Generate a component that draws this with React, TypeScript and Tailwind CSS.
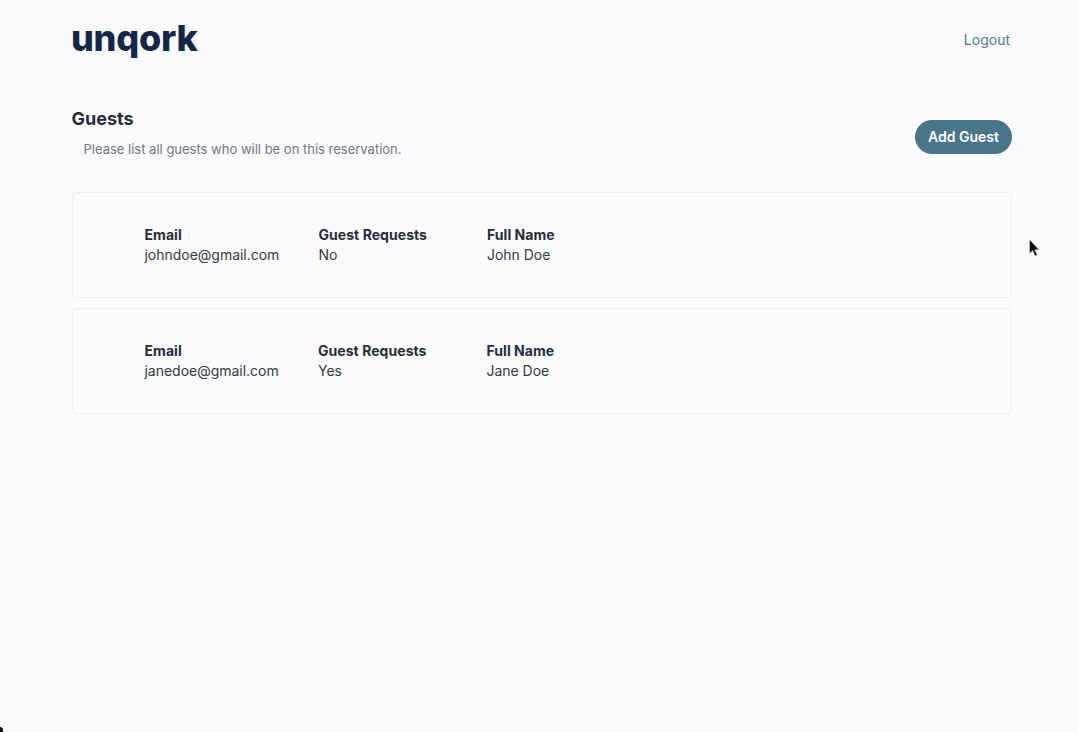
const font = { fontFamily: "Inter, 'Liberation Sans', sans-serif" };

function Field({ label, value, className }: { label: string; value: string; className: string }) {
  return (
    <div className={className}>
      <div className="text-[14px] leading-5 font-bold tracking-[0.05px] text-[#252d3a]">{label}</div>
      <div className="text-[14px] leading-5 tracking-[-0.02px] text-[#323a47]">{value}</div>
    </div>
  );
}

function GuestCard({ email, requests, name, second }: { email: string; requests: string; name: string; second?: boolean }) {
  return (
    <div className="h-[106px] rounded border border-[#eceef3] pt-[32px] pl-[71.5px] flex">
      <Field label="Email" value={email} className={second ? "w-[173.5px]" : "w-[174px]"} />
      <Field label="Guest Requests" value={requests} className="w-[168.5px]" />
      <Field label="Full Name" value={name} className="w-[120px]" />
    </div>
  );
}

export default function App() {
  return (
    <div style={font} className="relative h-[732px] overflow-hidden bg-[#fafafc] pl-[72px] pr-[66px]">
      <header className="flex h-[80px] items-start justify-between">
        <div className="mt-[15px] -ml-[1px] text-[36px] leading-[46px] font-extrabold tracking-[-0.25px] text-[#14274a]">unqork</div>
        <a className="mt-[30px] mr-[2px] text-[14px] leading-5 text-[#4f7a8e]">Logout</a>
      </header>
      <section className="mt-[27px] flex h-[85px] items-start justify-between">
        <div>
          <h1 className="-ml-[0.5px] text-[18px] leading-6 font-bold text-[#252d3a]">Guests</h1>
          <p className="mt-[8px] ml-[11.5px] text-[13px] leading-5 text-[#6d7684]">Please list all guests who will be on this reservation.</p>
        </div>
        <button className="mt-[13px] h-[34px] w-[97px] rounded-full bg-[#47758a] pb-[1px] text-[14px] font-semibold text-white">Add Guest</button>
      </section>
      <div className="flex flex-col gap-[10px]">
        <GuestCard email="johndoe@gmail.com" requests="No" name="John Doe" />
        <GuestCard email="janedoe@gmail.com" requests="Yes" name="Jane Doe" second />
      </div>
      <svg className="absolute left-[1029px] top-[239px]" width="12" height="19" viewBox="0 0 12 19">
        <path d="M0.5 0.5V14.5L3.7 11.6L6 17L8.2 16L5.9 10.8H10Z" fill="#111" stroke="#e5e5e5" strokeWidth="0.5" />
      </svg>
      <div className="absolute bottom-0 left-0 h-[5px] w-[3px] rounded-tr-[3px] bg-[#111]" />
    </div>
  );
}
